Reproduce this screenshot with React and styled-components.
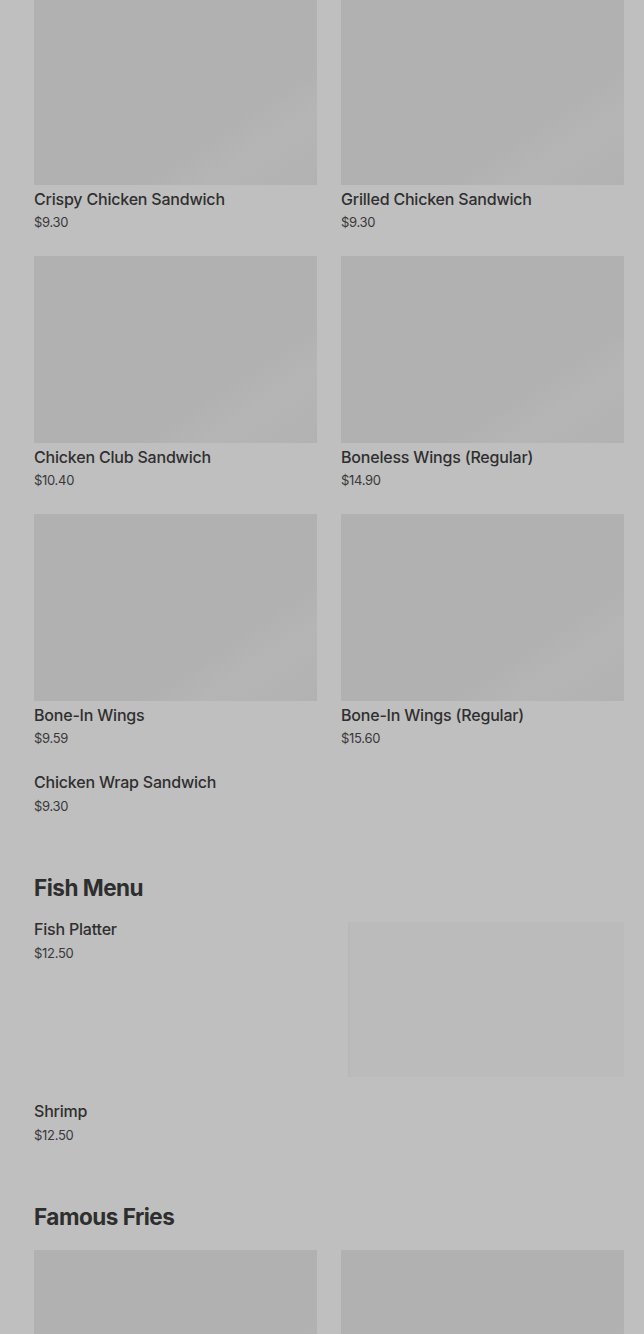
import styled, { createGlobalStyle } from "styled-components";

const GlobalStyle = createGlobalStyle`
  html, body {
    margin: 0;
    padding: 0;
    background: #bfbfbf;
  }
  body {
    font-family: Inter, "Liberation Sans", sans-serif;
    color: #2f2f2f;
  }
`;

const Page = styled.div`
  width: 644px;
  height: 1334px;
  overflow: hidden;
  background: #bfbfbf;
`;

const Content = styled.div`
  margin-top: -2px;
  padding: 0 20px 0 34px;
`;

const Section = styled.section`
  margin-top: ${(p) => (p.first ? "0" : "56px")};
`;

const Heading = styled.h2`
  margin: 0 0 ${(p) => p.space || 15}px;
  font-size: 22.5px;
  line-height: 32px;
  font-weight: 700;
  letter-spacing: -0.5px;
  color: #2e2e2e;
`;

const Grid = styled.div`
  display: grid;
  grid-template-columns: 283px 283px;
  column-gap: 24px;
  row-gap: 24px;
`;

const Card = styled.div`
  display: flex;
  flex-direction: column;
`;

const Thumb = styled.div`
  height: 187px;
  margin-bottom: 4px;
  background: linear-gradient(
    to bottom right,
    #b1b1b1 0%,
    #b1b1b1 68%,
    #b5b5b5 80%,
    #b2b2b2 100%
  );
`;

const Title = styled.div`
  font-size: 16px;
  line-height: 20px;
  font-weight: 500;
  letter-spacing: -0.2px;
  color: #2f2f2f;
`;

const Price = styled.div`
  margin-top: ${(p) => (p.loose ? "4px" : "3px")};
  font-size: 13px;
  line-height: 20px;
  font-weight: 400;
  letter-spacing: -0.3px;
  color: #393939;
`;

const List = styled.div`
  display: flex;
  flex-direction: column;
  gap: 24px;
`;

const Row = styled.div`
  display: flex;
  justify-content: space-between;
  align-items: flex-start;
`;

const RowText = styled.div`
  display: flex;
  flex-direction: column;
`;

const RowImage = styled.div`
  width: 276px;
  height: 155px;
  margin-top: 3px;
  background: #bbbbbb;
  border-left: 2px solid #b8b8b8;
  box-sizing: border-box;
`;

const chicken = [
  { name: "Crispy Chicken Sandwich", price: "$9.30", img: true },
  { name: "Grilled Chicken Sandwich", price: "$9.30", img: true },
  { name: "Chicken Club Sandwich", price: "$10.40", img: true },
  { name: "Boneless Wings (Regular)", price: "$14.90", img: true },
  { name: "Bone-In Wings", price: "$9.59", img: true },
  { name: "Bone-In Wings (Regular)", price: "$15.60", img: true },
  { name: "Chicken Wrap Sandwich", price: "$9.30", img: false },
];

const MenuCard = ({ item }) => (
  <Card>
    {item.img && <Thumb />}
    <Title>{item.name}</Title>
    <Price loose={!item.img}>{item.price}</Price>
  </Card>
);

const App = () => {
  return (
    <Page>
      <GlobalStyle />
      <Content>
        <Section first>
          <Grid>
            {chicken.map((item) => (
              <MenuCard key={item.name} item={item} />
            ))}
          </Grid>
        </Section>

        <Section>
          <Heading>Fish Menu</Heading>
          <List>
            <Row>
              <RowText>
                <Title>Fish Platter</Title>
                <Price loose>$12.50</Price>
              </RowText>
              <RowImage />
            </Row>
            <RowText>
              <Title>Shrimp</Title>
              <Price loose>$12.50</Price>
            </RowText>
          </List>
        </Section>

        <Section>
          <Heading space={17}>Famous Fries</Heading>
          <Grid>
            <Card>
              <Thumb />
            </Card>
            <Card>
              <Thumb />
            </Card>
          </Grid>
        </Section>
      </Content>
    </Page>
  );
};

export default App;
